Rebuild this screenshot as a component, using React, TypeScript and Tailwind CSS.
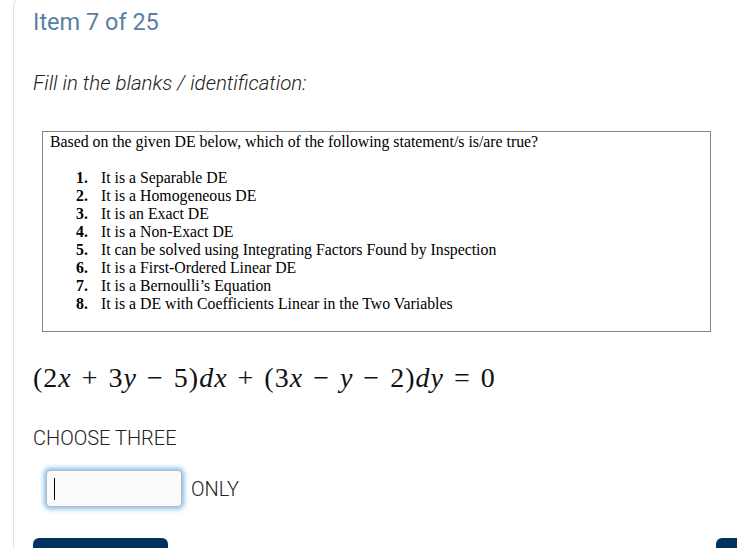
import React from 'react';

const STATEMENTS = [
  'It is a Separable DE',
  'It is a Homogeneous DE',
  'It is an Exact DE',
  'It is a Non-Exact DE',
  'It can be solved using Integrating Factors Found by Inspection',
  'It is a First-Ordered Linear DE',
  'It is a Bernoulli\u2019s Equation',
  'It is a DE with Coefficients Linear in the Two Variables',
];

function V({ children }: { children: React.ReactNode }) {
  return <span className="italic">{children}</span>;
}

function Op({ children }: { children: React.ReactNode }) {
  return <span className="mx-[10px]">{children}</span>;
}

export default function App() {
  return (
    <div className="w-[737px] h-[548px] overflow-hidden bg-white pl-[13px]">
      <div className="-mt-[2px] w-[760px] h-[560px] border-l border-t border-[#e3e3e3] rounded-tl-lg pl-[19px] pt-[9px] font-['Roboto',sans-serif]">
        <h2 className="text-[23.5px] leading-[28px] text-[#5a7fa3] font-normal">Item 7 of 25</h2>

        <p className="mt-[35px] text-[20.5px] leading-[24px] italic font-light text-[#222]">Fill in the blanks / identification:</p>

        <div className="mt-[36px] ml-[9px] w-[669px] h-[201px] border border-[#858585] pl-[7px] pt-[1px] font-['Liberation_Serif',serif] text-[15.8px] leading-[18px] text-black">
          <p>Based on the given DE below, which of the following statement/s is/are true?</p>
          <ol className="mt-[18px] pl-[26px]">
            {STATEMENTS.map((s, i) => (
              <li key={i} className="flex">
                <span className="w-[25px] font-bold">{i + 1}.</span>
                <span>{s}</span>
              </li>
            ))}
          </ol>
        </div>

        <p className="mt-[30px] font-['Liberation_Serif',serif] text-[28px] leading-[32px] tracking-[1px] text-[#111] whitespace-nowrap">
          (2<V>x</V><Op>+</Op>3<V>y</V><Op>−</Op>5)<V>dx</V><Op>+</Op>(3<V>x</V><Op>−</Op><V>y</V><Op>−</Op>2)<V>dy</V><Op>=</Op>0
        </p>

        <p className="mt-[32px] text-[20px] leading-[24px] font-light text-[#222]">CHOOSE THREE</p>

        <div className="mt-[20px] ml-[13px] flex items-center gap-[9px]">
          <div className="w-[136px] h-[37px] rounded-[4px] border border-[#b9b9b9] bg-[#fbfbfb] shadow-[0_0_5px_2px_rgba(102,175,233,0.85)] flex items-center pl-[7px]">
            <span className="w-px h-[22px] bg-black" />
          </div>
          <span className="text-[20px] font-light text-[#222]">ONLY</span>
        </div>

        <div className="mt-[31px] flex">
          <div className="w-[135px] h-[20px] rounded-t-md bg-[#003260]" />
          <div className="ml-[548px] w-[40px] h-[20px] rounded-t-md bg-[#003260]" />
        </div>
      </div>
    </div>
  );
}
